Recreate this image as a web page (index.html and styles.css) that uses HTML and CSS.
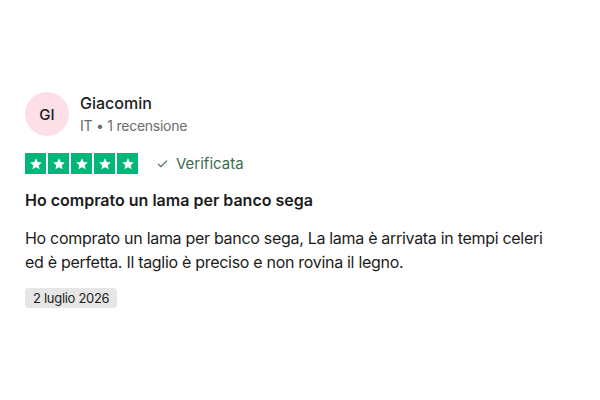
FILE: index.html
```html
<!DOCTYPE html>
<html lang="it">
<head>
  <meta charset="UTF-8">
  <meta name="viewport" content="width=device-width, initial-scale=1.0">
  <title>Recensione</title>
  <link rel="stylesheet" href="styles.css">
</head>
<body>
  <article class="review-card">
    <div class="consumer">
      <div class="avatar">GI</div>
      <div class="consumer-info">
        <div class="consumer-name">Giacomin</div>
        <div class="consumer-meta">IT • 1 recensione</div>
      </div>
    </div>

    <div class="rating-row">
      <div class="stars">
        <span class="star"><svg viewBox="0 0 24 24"><path d="M12 3.5l2.6 5.6 6.1.6-4.6 4.1 1.3 6-5.4-3.1-5.4 3.1 1.3-6-4.6-4.1 6.1-.6z"/></svg></span>
        <span class="star"><svg viewBox="0 0 24 24"><path d="M12 3.5l2.6 5.6 6.1.6-4.6 4.1 1.3 6-5.4-3.1-5.4 3.1 1.3-6-4.6-4.1 6.1-.6z"/></svg></span>
        <span class="star"><svg viewBox="0 0 24 24"><path d="M12 3.5l2.6 5.6 6.1.6-4.6 4.1 1.3 6-5.4-3.1-5.4 3.1 1.3-6-4.6-4.1 6.1-.6z"/></svg></span>
        <span class="star"><svg viewBox="0 0 24 24"><path d="M12 3.5l2.6 5.6 6.1.6-4.6 4.1 1.3 6-5.4-3.1-5.4 3.1 1.3-6-4.6-4.1 6.1-.6z"/></svg></span>
        <span class="star"><svg viewBox="0 0 24 24"><path d="M12 3.5l2.6 5.6 6.1.6-4.6 4.1 1.3 6-5.4-3.1-5.4 3.1 1.3-6-4.6-4.1 6.1-.6z"/></svg></span>
      </div>
      <div class="verified">
        <svg viewBox="0 0 16 16"><path d="M2.5 8.5l3.5 3.5 7.5-7.5"/></svg>
        Verificata
      </div>
    </div>

    <h2 class="review-title">Ho comprato un lama per banco sega</h2>
    <p class="review-text">Ho comprato un lama per banco sega, La lama è arrivata in tempi celeri ed è perfetta. Il taglio è preciso e non rovina il legno.</p>
    <span class="review-date">2 luglio 2026</span>
  </article>
</body>
</html>
```

FILE: styles.css
```css
/* Page */
body {
  margin: 0;
  background: #fff;
  font-family: Inter, "Noto Sans", sans-serif;
  color: #1c1c1c;
}

.review-card {
  padding: 92px 25px 0 25px;
  display: flex;
  flex-direction: column;
  align-items: flex-start;
}

/* Consumer header */
.consumer {
  display: flex;
  align-items: center;
  gap: 11px;
}

.avatar {
  width: 44px;
  height: 44px;
  border-radius: 50%;
  background: #fcdfe7;
  display: flex;
  justify-content: center;
  align-items: center;
  font-size: 15px;
  font-weight: 500;
  color: #1c1c1c;
}

.consumer-name {
  font-size: 16px;
  line-height: 20px;
  font-weight: 500;
}

.consumer-meta {
  margin-top: 4px;
  font-size: 14px;
  line-height: 18px;
  letter-spacing: -0.25px;
  color: #6b6b6b;
}

/* Stars + verified */
.rating-row {
  margin-top: 17px;
  display: flex;
  align-items: center;
  gap: 18px;
}

.stars {
  display: flex;
  gap: 2px;
}

.star {
  width: 21px;
  height: 21px;
  background: #00b67a;
  display: flex;
  justify-content: center;
  align-items: center;
}

.star svg {
  width: 16px;
  height: 16px;
  fill: #fff;
}

.verified {
  display: flex;
  align-items: center;
  gap: 7px;
  font-size: 15px;
  color: #3b6e4b;
}

.verified svg {
  width: 13px;
  height: 13px;
  fill: none;
  stroke: #3b6e4b;
  stroke-width: 1.4;
}

/* Review body */
.review-title {
  margin: 14px 0 0 0;
  font-size: 16px;
  line-height: 24px;
  font-weight: 600;
}

.review-text {
  margin: 14px 0 0 0;
  font-size: 16px;
  line-height: 24px;
  letter-spacing: -0.3px;
  max-width: 535px;
}

.review-date {
  margin-top: 14px;
  background: #e6e6e6;
  border-radius: 4px;
  padding: 2px 8px;
  font-size: 13px;
  line-height: 16px;
  letter-spacing: -0.3px;
  color: #1c1c1c;
}
```
